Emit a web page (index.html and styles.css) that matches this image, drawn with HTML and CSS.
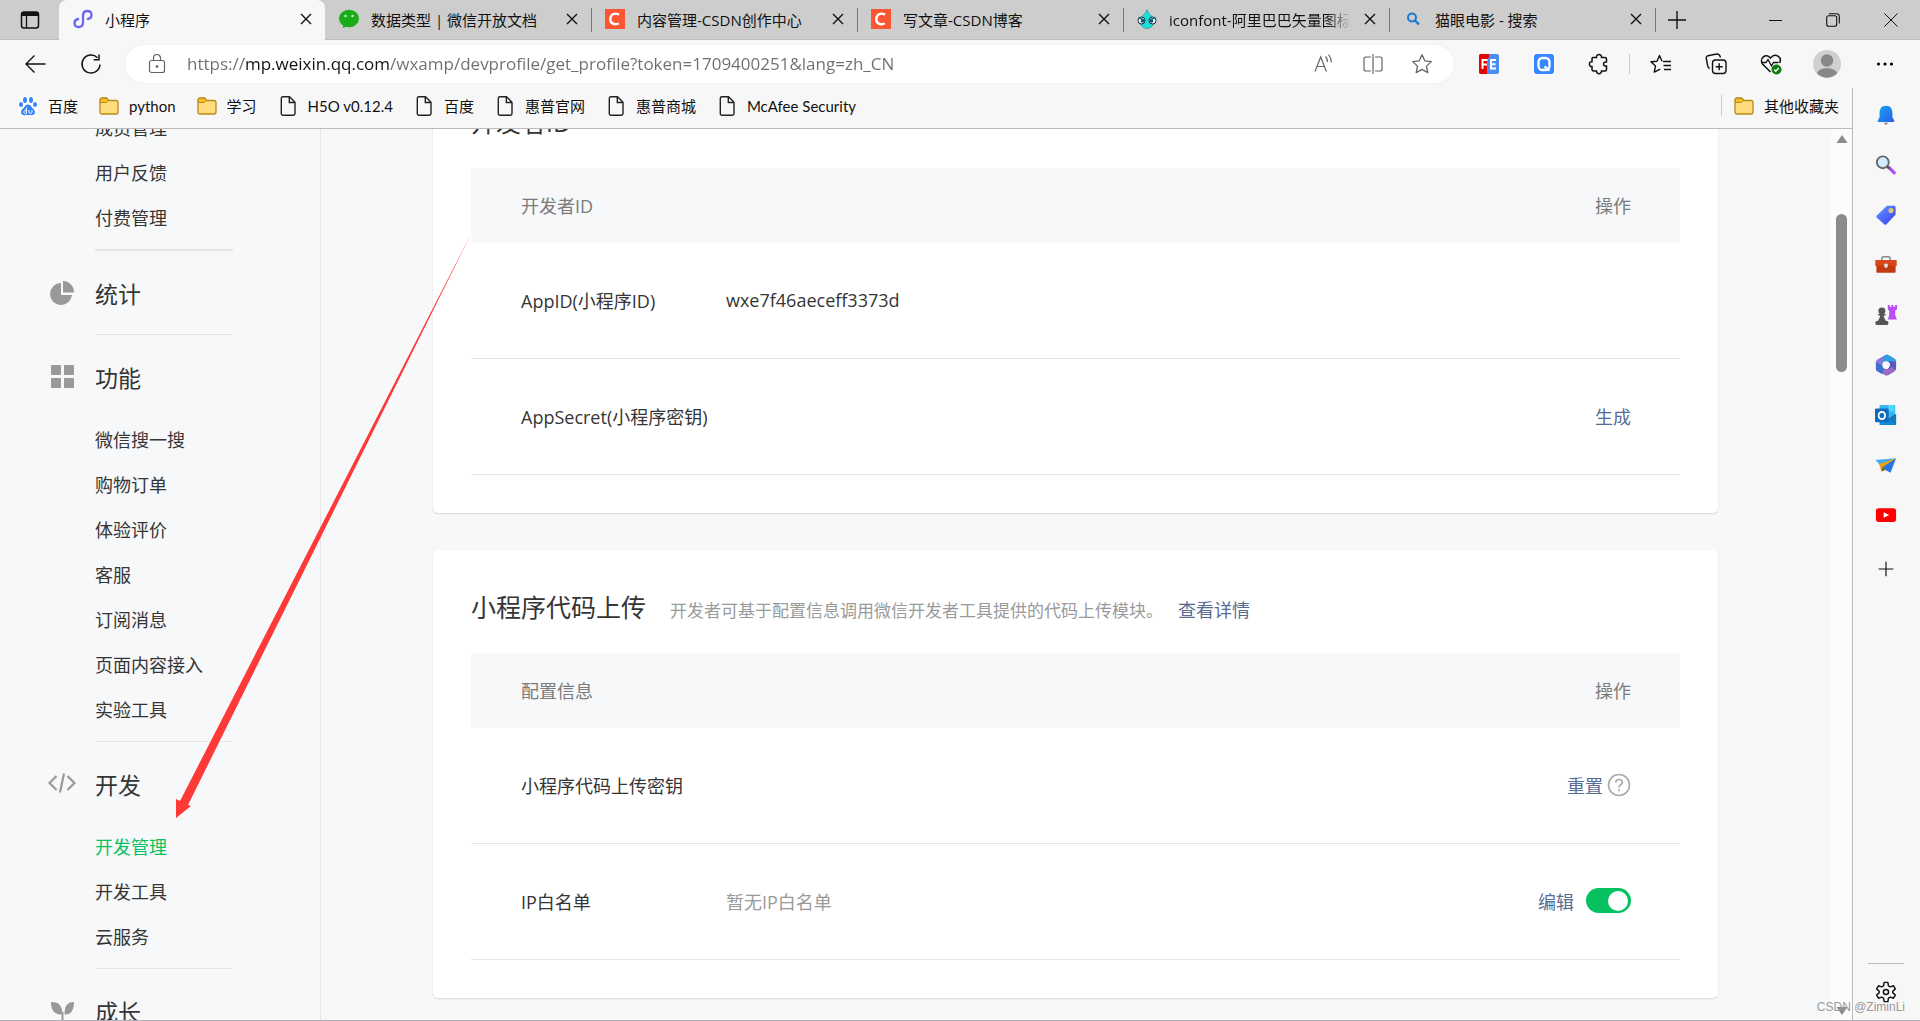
FILE: index.html
```html
<!DOCTYPE html>
<html lang="zh-CN">
<head>
<meta charset="utf-8">
<title>小程序</title>
<link rel="stylesheet" href="styles.css">
</head>
<body>
<svg class="sprite" aria-hidden="true">
  <symbol id="i-close" viewBox="0 0 12 12"><path d="M1 1l10 10M11 1L1 11" fill="none" stroke="#111" stroke-width="1.4"/></symbol>
  <symbol id="i-csdn" viewBox="0 0 20 20"><path d="M0 0h20v20H0z" fill="#fc5531"/><path d="M14 5.6C9.500 3.200 5.300 5.400 5.300 10.200c0 4.600 4 6 8.500 4.300" fill="none" stroke="#fff" stroke-width="2.400"/></symbol>
  <symbol id="i-folder" viewBox="0 0 20 20"><path d="M1 4.500C1 3 1.600 2 3 2h4.500l2.500 2.500h7c1.200 0 2 .8 2 2V16c0 1.200-.8 2-2 2H3c-1.200 0-2-.8-2-2z" fill="#ffdc7c" stroke="#b98a1c" stroke-width="1.300"/><path d="M1.300 6.500V4.300C1.300 3 2 2.300 3 2.300h4.300L9.600 4.500 7.500 6.500z" fill="#f5bd27" stroke="#b98a1c"/></symbol>
  <symbol id="i-doc" viewBox="0 0 20 20"><path d="M5 .8h6.500L17 6.300V17.500c0 1-.7 1.700-1.700 1.700H5c-1 0-1.700-.7-1.700-1.700v-15C3.300 1.500 4 .8 5 .8zM11.300 1v5.500H17" fill="none" stroke="#222" stroke-width="1.400"/></symbol>
</svg>

<header class="chrome">
  <div class="tabstrip">
    <button class="workspace" aria-label="标签页操作菜单"><svg width="20" height="20" viewBox="0 0 20 20"><rect x="1.500" y="2" width="17" height="16" rx="2.500" fill="none" stroke="#111" stroke-width="1.500"/><path d="M1.500 6V4.500a2.500 2.500 0 0 1 2.500-2.500h12a2.500 2.500 0 0 1 2.500 2.500V6z" fill="#111"/><path d="M6.500 6v12" stroke="#111" stroke-width="1.300"/></svg></button>
    <div class="tab tab-active">
      <svg class="tab-icon" viewBox="0 0 20 20"><path d="M10 13.500V6.500c0-2.700 1.800-4.500 4.300-4.500S18.500 3.700 18.500 6c0 2.100-1.500 3.600-3.600 4M10 6.500v7c0 2.700-1.800 4.500-4.300 4.500S1.500 16.300 1.500 14c0-2.100 1.500-3.600 3.600-4" fill="none" stroke="#6b67f0" stroke-width="2.300" stroke-linecap="round"/></svg>
      <span class="tab-title">小程序</span>
      <button class="tab-close" aria-label="关闭"><svg width="12" height="12"><use href="#i-close"/></svg></button>
    </div>
    <div class="tab">
      <svg class="tab-icon" viewBox="0 0 20 20"><ellipse cx="10" cy="9.500" rx="10" ry="8.700" fill="#1aad19"/><path d="M4 14v5l5-2z" fill="#1aad19"/><circle cx="6.500" cy="7" r="1.200" fill="#c8f0c8"/><circle cx="13.500" cy="7" r="1.200" fill="#c8f0c8"/></svg>
      <span class="tab-title">数据类型 | 微信开放文档</span>
      <button class="tab-close" aria-label="关闭"><svg width="12" height="12"><use href="#i-close"/></svg></button>
    </div>
    <div class="tab">
      <svg class="tab-icon"><use href="#i-csdn"/></svg>
      <span class="tab-title">内容管理-CSDN创作中心</span>
      <button class="tab-close" aria-label="关闭"><svg width="12" height="12"><use href="#i-close"/></svg></button>
    </div>
    <div class="tab">
      <svg class="tab-icon"><use href="#i-csdn"/></svg>
      <span class="tab-title">写文章-CSDN博客</span>
      <button class="tab-close" aria-label="关闭"><svg width="12" height="12"><use href="#i-close"/></svg></button>
    </div>
    <div class="tab">
      <svg class="tab-icon" viewBox="0 0 20 20"><path d="M10 .5C11 4 14 6 16 9c3 5-1 10.500-6 10.500S1 14 4 9c2-3 5-5 6-8.500z" fill="#18e0d8" stroke="#2a7f86" stroke-width=".6"/><circle cx="4.500" cy="11.500" r="3.500" fill="#fff" stroke="#123"/><circle cx="15.500" cy="11.500" r="3.500" fill="#fff" stroke="#123"/><circle cx="5.500" cy="12" r="1.800" fill="#124a7a"/><circle cx="14.500" cy="12" r="1.800" fill="#124a7a"/><path d="M1.500 8.500l6.500 3M18.500 8.500L12 11.500" stroke="#0e6f86" stroke-width="1.500"/></svg>
      <span class="tab-title tab-fade">iconfont-阿里巴巴矢量图标库</span>
      <button class="tab-close" aria-label="关闭"><svg width="12" height="12"><use href="#i-close"/></svg></button>
    </div>
    <div class="tab">
      <svg class="tab-icon" viewBox="0 0 20 20"><circle cx="9" cy="8.500" r="4" fill="none" stroke="#1b78d0" stroke-width="2"/><path d="M12 11.500l4 4" stroke="#1b78d0" stroke-width="2.400"/></svg>
      <span class="tab-title">猫眼电影 - 搜索</span>
      <button class="tab-close" aria-label="关闭"><svg width="12" height="12"><use href="#i-close"/></svg></button>
    </div>
    <button class="newtab" aria-label="新建标签页"><svg width="18" height="18"><path d="M9 0v18M0 9h18" stroke="#111" stroke-width="1.400"/></svg></button>
    <div class="window-buttons">
      <button aria-label="最小化"><svg width="14" height="14"><path d="M1 7.500h13" stroke="#111"/></svg></button>
      <button aria-label="还原"><svg width="14" height="14"><rect x=".7" y="2.700" width="10" height="10.500" rx="2" fill="none" stroke="#111" stroke-width="1.100"/><path d="M3 .7h7.500c1.700 0 2.800 1 2.800 2.800v7" fill="none" stroke="#111" stroke-width="1.100"/></svg></button>
      <button aria-label="关闭窗口"><svg width="14" height="14"><path d="M.5 .5l13 13M13.500 .5l-13 13" stroke="#111"/></svg></button>
    </div>
  </div>

  <div class="toolbar">
    <button class="nav-button" aria-label="返回"><svg width="22" height="20"><path d="M21.500 10H2M10.500 1.500L2 10l8.500 8.500" fill="none" stroke="#111" stroke-width="1.400"/></svg></button>
    <button class="nav-button" aria-label="刷新"><svg width="22" height="22"><path d="M20 11.500a9 9 0 1 1-2.600-6.800M19 1.500v5.200h-5.300" fill="none" stroke="#111" stroke-width="1.500"/></svg></button>
    <div class="address">
      <svg width="18" height="20" viewBox="0 0 18 20"><rect x="1.500" y="6.500" width="15" height="12" rx="2" fill="none" stroke="#666" stroke-width="1.200"/><path d="M5.500 6.500V4a3.500 3.500 0 0 1 7 0v2.500" fill="none" stroke="#666" stroke-width="1.200"/><circle cx="9" cy="12.500" r="1.300" fill="#555"/></svg>
      <input class="url" type="text" aria-label="地址栏" value="https://mp.weixin.qq.com/wxamp/devprofile/get_profile?token=1709400251&amp;lang=zh_CN">
      <button aria-label="朗读"><svg width="22" height="22" fill="none" stroke="#666" stroke-width="1.200"><path d="M2 18.500L7.700 4l5.700 14.500M4 13.500h7.500M12.500 3.500c1.300 1.500 2 3.500 2 5.500M15.500 1.500c2 2.500 3 5 3 8"/></svg></button>
      <button aria-label="分屏"><svg width="22" height="22" fill="none" stroke="#666" stroke-width="1.200"><path d="M9 4H4C2.700 4 2 4.700 2 6v10c0 1.300.7 2 2 2h5M13 4h5c1.300 0 2 .7 2 2v10c0 1.300-.7 2-2 2h-5M11 1v20"/></svg></button>
      <button aria-label="收藏"><svg width="22" height="22"><path d="M11 1.800l2.800 6 6.500.8-4.800 4.500 1.300 6.500L11 16.400l-5.800 3.200 1.300-6.500L1.700 8.600l6.500-.8z" fill="none" stroke="#666" stroke-width="1.300" stroke-linejoin="round"/></svg></button>
    </div>
    <div class="tools">
      <button aria-label="FE 扩展"><svg width="20" height="20" viewBox="0 0 20 20"><rect width="20" height="20" rx="2" fill="#4b8df5"/><path d="M0 2a2 2 0 0 1 2-2h8v3l-2 3v14H2a2 2 0 0 1-2-2z" fill="#e80000"/><path d="M3.500 15V6h5M3.500 10.500h4.500M17 6h-5v8.500h5M12 10.300h4.500" fill="none" stroke="#fff" stroke-width="2"/></svg></button>
      <button aria-label="Q 扩展"><svg width="20" height="20" viewBox="0 0 20 20"><rect width="20" height="20" rx="3" fill="#3688ff"/><rect x="4.500" y="4" width="11" height="12" rx="4" fill="none" stroke="#fff" stroke-width="2.300"/><path d="M10.500 12.500l5 4" stroke="#fff" stroke-width="2.300"/></svg></button>
      <button aria-label="扩展"><svg width="22" height="22"><path d="M5 4.500h3.500c-.6-4 5.600-4 5 0H17c1 0 1.500.5 1.500 1.500v3c-4-.6-4 4.600 0 4v3.500c0 1-.5 1.500-1.500 1.500h-3.500c.4 3.500-5.400 3.500-5 0H5.500c-1 0-1.500-.5-1.500-1.500V13.500c-3.500.5-3.500-5.300 0-4.800V6c0-1 .3-1.500 1-1.500z" fill="none" stroke="#111" stroke-width="1.500"/></svg></button>
      <span class="tool-divider"></span>
      <button aria-label="收藏夹"><svg width="22" height="22"><path d="M12 8.300L9.500 2.500 7 8.300l-6 .5 4.500 4.300-1.300 6 6-3M13 8.500h8M13.500 12.500h7.500M14 16.500h7" fill="none" stroke="#111" stroke-width="1.400" stroke-linejoin="round"/></svg></button>
      <button aria-label="集锦"><svg width="22" height="22" fill="none" stroke="#111" stroke-width="1.400"><rect x="7.500" y="7" width="13.500" height="13.500" rx="3"/><path d="M14.200 10.200v7M10.700 13.700h7M4.500 15.500C3.500 15 3 14 2.700 13L1.300 5.500C1 4 2 3 3 2.700L11.500 1C13 .8 14.500 1.500 15 3l.4 1.500"/></svg></button>
      <button aria-label="浏览器概要"><svg width="22" height="22"><path d="M10.500 19L2.500 11C-1 6 5.500-1 10.500 5c5-6 12-.5 9 5" fill="none" stroke="#111" stroke-width="1.500"/><path d="M1 9.500h5l2-3 3.500 6.500 2-3.500h5" fill="none" stroke="#111" stroke-width="1.300"/><circle cx="16.500" cy="16.500" r="5" fill="#107c10"/><path d="M14.200 16.500l1.600 1.700 3-3.200" fill="none" stroke="#fff" stroke-width="1.300"/></svg></button>
      <button aria-label="个人资料"><svg width="28" height="28" viewBox="0 0 28 28"><circle cx="14" cy="14" r="14" fill="#d2d0ce"/><circle cx="14" cy="10.500" r="6.200" fill="#8a8886"/><path d="M4 23.500c1-7 19-7 20 0C18.500 29 9.500 29 4 23.500z" fill="#8a8886"/></svg></button>
      <button aria-label="设置及其他"><svg width="20" height="6"><circle cx="3.500" cy="3" r="1.600"/><circle cx="10" cy="3" r="1.600"/><circle cx="16.500" cy="3" r="1.600"/></svg></button>
    </div>
  </div>
</header>

<div class="body">
  <div class="left">
    <nav class="bookmarks" aria-label="收藏夹栏">
      <a href="#"><svg class="bm-icon" viewBox="0 0 20 20"><path d="M0 0h20v20H0z" fill="#fff"/><g fill="#3385ff"><ellipse cx="7" cy="4" rx="2" ry="3"/><ellipse cx="13" cy="4" rx="2" ry="3"/><ellipse cx="3" cy="8.500" rx="2" ry="2.600"/><ellipse cx="17" cy="8.500" rx="2" ry="2.600"/><path d="M10 8.500c3 0 3.500 3 5.500 4.500 3 3 1 6.500-2 6.200-2-.3-5-.3-7 0-3 .3-5-3.200-2-6.200C6.500 11.500 7 8.500 10 8.500z"/></g><path d="M8.500 11.500v6M8.500 14.500c-3-1-3.500 3-1 3h1M11 14v2.500c0 1 2.500 1 3 0V14" fill="none" stroke="#fff"/></svg>百度</a>
      <a href="#"><svg class="bm-icon"><use href="#i-folder"/></svg>python</a>
      <a href="#"><svg class="bm-icon"><use href="#i-folder"/></svg>学习</a>
      <a href="#"><svg class="bm-icon"><use href="#i-doc"/></svg>H5O v0.12.4</a>
      <a href="#"><svg class="bm-icon"><use href="#i-doc"/></svg>百度</a>
      <a href="#"><svg class="bm-icon"><use href="#i-doc"/></svg>惠普官网</a>
      <a href="#"><svg class="bm-icon"><use href="#i-doc"/></svg>惠普商城</a>
      <a href="#"><svg class="bm-icon"><use href="#i-doc"/></svg>McAfee Security</a>
      <a class="bm-other" href="#"><svg class="bm-icon"><use href="#i-folder"/></svg>其他收藏夹</a>
    </nav>

    <div class="viewport">
      <nav class="menu" aria-label="小程序管理">
        <section>
          <a href="#">成员管理</a>
          <a href="#">用户反馈</a>
          <a href="#">付费管理</a>
        </section>
        <section class="menu-single">
          <h2><svg class="menu-icon" viewBox="0 0 28 28"><path d="M13 4v12h11A11 11 0 1 1 13 4z" fill="#999"/><path d="M15 2a11 11 0 0 1 11 11.500H15z" fill="#999"/></svg>统计</h2>
        </section>
        <section>
          <h2><svg class="menu-icon" viewBox="0 0 28 28" fill="#999"><rect x="3" y="2" width="10" height="10" rx="1"/><rect x="16" y="2" width="10" height="10" rx="1"/><rect x="3" y="15" width="10" height="10" rx="1"/><rect x="16" y="15" width="10" height="10" rx="1"/></svg>功能</h2>
          <a href="#">微信搜一搜</a>
          <a href="#">购物订单</a>
          <a href="#">体验评价</a>
          <a href="#">客服</a>
          <a href="#">订阅消息</a>
          <a href="#">页面内容接入</a>
          <a href="#">实验工具</a>
        </section>
        <section>
          <h2><svg class="menu-icon" viewBox="0 0 28 28"><path d="M8.500 6L1.500 13l7 7M19.500 6l7 7-7 7M16 3.500L12 22.500" fill="none" stroke="#999" stroke-width="2.200"/></svg>开发</h2>
          <a class="current" href="#">开发管理</a>
          <a href="#">开发工具</a>
          <a href="#">云服务</a>
        </section>
        <section>
          <h2><svg class="menu-icon" viewBox="0 0 28 28"><path d="M3 5c7-.5 11.500 3 11.500 12.500C7 18 3 14 3 5zM26 5c-6 0-9.500 3-9.500 12.500C23 18 26 13 26 5z" fill="#999"/><path d="M14.500 15v10" stroke="#999" stroke-width="2"/></svg>成长</h2>
        </section>
      </nav>

      <main class="content">
        <section class="card">
          <div class="card-head"><h3>开发者ID</h3></div>
          <table>
            <thead><tr><th class="c-name">开发者ID</th><th></th><th class="c-op">操作</th></tr></thead>
            <tbody>
              <tr><td>AppID(小程序ID)</td><td>wxe7f46aeceff3373d</td><td></td></tr>
              <tr><td colspan="2">AppSecret(小程序密钥)</td><td class="c-op"><a href="#">生成</a></td></tr>
            </tbody>
          </table>
        </section>
        <section class="card">
          <div class="card-head">
            <h3>小程序代码上传</h3>
            <p>开发者可基于配置信息调用微信开发者工具提供的代码上传模块。</p>
            <a href="#">查看详情</a>
          </div>
          <table>
            <thead><tr><th class="c-name">配置信息</th><th></th><th class="c-op">操作</th></tr></thead>
            <tbody>
              <tr><td>小程序代码上传密钥</td><td></td><td class="c-op"><div class="ops ops-tight"><a href="#">重置</a><svg width="24" height="24"><circle cx="12" cy="12" r="10.500" fill="none" stroke="#aaa" stroke-width="1.600"/><path d="M8.800 9.500c0-4 6.400-4 6.400 0 0 2.300-3.200 2.300-3.200 5M12 16.300v2" fill="none" stroke="#aaa" stroke-width="1.700"/></svg></div></td></tr>
              <tr><td>IP白名单</td><td class="muted">暂无IP白名单</td><td class="c-op"><div class="ops"><a href="#">编辑</a><input class="switch" type="checkbox" aria-label="IP白名单" checked></div></td></tr>
            </tbody>
          </table>
        </section>
      </main>

      <div class="scrollbar">
        <svg width="12" height="10"><path d="M6 1l5.500 8H.5z" fill="#8b8b8b"/></svg>
        <span class="thumb"></span>
        <svg width="12" height="10"><path d="M6 9L.5 1h11z" fill="#8b8b8b"/></svg>
      </div>
    </div>
  </div>

  <aside class="rail">
    <button aria-label="通知"><svg viewBox="0 0 24 24"><defs><linearGradient id="g1" x2="1" y2="1"><stop stop-color="#17a3ea"/><stop offset="1" stop-color="#2a5ff0"/></linearGradient></defs><path d="M9.500 20.500h5L12 23z" fill="#777"/><path d="M12 2c5 0 7 3.500 7 8v4.500l2 3.500c.3 1-.2 1.500-1 1.500H4c-.8 0-1.300-.5-1-1.500l2-3.500V10c0-4.500 2-8 7-8z" fill="url(#g1)"/></svg></button>
    <button aria-label="搜索"><svg viewBox="0 0 24 24"><path d="M15.500 15l5.500 5.500" stroke="#b44cf5" stroke-width="3.500" stroke-linecap="round"/><circle cx="8.500" cy="9" r="6.500" fill="#d3ecff" stroke="#666" stroke-width="2"/><path d="M13 13.500l2.500 2.500" stroke="#555" stroke-width="2.500"/></svg></button>
    <button aria-label="购物"><svg viewBox="0 0 24 24"><defs><linearGradient id="g2" x2="1" y2="1"><stop stop-color="#5fa0ff"/><stop offset="1" stop-color="#3b35f5"/></linearGradient></defs><path d="M13 2h7.500c1.300 0 2 .7 2 2v7.500l-10 10.500c-.8.8-1.600.8-2.400 0L2 15c-.8-.8-.8-1.600 0-2.400z" fill="url(#g2)"/><circle cx="17.500" cy="7" r="2" fill="#bda9ff" stroke="#f5d432" stroke-width="1.500"/></svg></button>
    <button aria-label="工具"><svg viewBox="0 0 24 24"><path d="M7.500 7V5c0-1.500.5-2 2-2h5c1.500 0 2 .5 2 2v2" fill="none" stroke="#888" stroke-width="1.700"/><path d="M.3 7.500c0-.5.5-1 1-1h21.400c.5 0 1 .5 1 1V13H.3z" fill="#d9481a"/><path d="M1.500 12.500h21V19c0 1-.5 1.500-1.500 1.500H3c-1 0-1.500-.5-1.500-1.500z" fill="#c23a12"/><path d="M10 10.500h4V14l-2 1.500-2-1.500z" fill="#ddd"/></svg></button>
    <button aria-label="游戏"><svg viewBox="0 0 24 24"><path d="M14 1h2v2h2V1h2v2h2V1h2v5l-2 1v5l2 5H14l1.500-5V7L14 6z" fill="#b94ff2"/><g fill="#555"><circle cx="7.500" cy="7.500" r="3.800"/><path d="M3.500 11h8v1.500h-2c0 3 1.500 4 2.500 6H3c1-2 2.500-3 2.500-6h-2z"/><rect x=".5" y="18.500" width="14" height="4.500" rx="1.500"/></g></svg></button>
    <button aria-label="Microsoft 365"><svg viewBox="0 0 24 24"><path d="M12 .8L3 5.800C1.800 6.500 1 7.600 1 9v7.500l8 1.500V9.500z" fill="#8c78dc"/><path d="M12 .8c1-.4 1.800-.3 2.700.2L21 4.800c1.300.8 2 2 2 3.500V14L14 9 8 10.500 9 3z" fill="#2c9fdf"/><path d="M23 8.500v7c0 1.500-.7 2.600-2 3.400l-6.500 3.900-1-6.300L16.500 12l-1.500-4.500z" fill="#5b57c4"/><path d="M14.700 22.800c-1.300.8-3 .8-4.300 0L6 20l2-5 6 1.500 5-2.500 3 4-1 1z" fill="#9a6ac6"/><path d="M1 9v7c0 1.400.8 2.500 2 3.200l5 3 1.500-5.700-2-4.500z" fill="#3d6fd0"/><circle cx="12" cy="12" r="4" fill="#f7f7f7"/></svg></button>
    <button aria-label="Outlook"><svg viewBox="0 0 24 24"><path d="M5 1h16c.7 0 1 .3 1 1v12H5z" fill="#38b6ee"/><path d="M14 1h7v7h-7z" fill="#50d9ff"/><path d="M5 11l10 4 8-4v12H5z" fill="#1487d8"/><path d="M23 11v12L13 16z" fill="#147ac0"/><rect x="0" y="5" width="15" height="15" rx="1.500" fill="#0f6cbd"/><ellipse cx="7.500" cy="12.500" rx="3.500" ry="4" fill="none" stroke="#fff" stroke-width="2"/></svg></button>
    <button aria-label="Drop"><svg viewBox="0 0 24 24"><path d="M.5 6.500L23 4.500 5.500 12z" fill="#3aaef5"/><path d="M23 4.500L4.500 11l2.500 8z" fill="#f1a20b"/><path d="M23 4.500L8 14.500l3.500 3 5.500 3z" fill="#2876e4"/><path d="M7 19l1-4.500 3.500 3z" fill="#8a5d16"/></svg></button>
    <button aria-label="YouTube"><svg viewBox="0 0 24 24"><rect x="1" y="4.500" width="22" height="15" rx="3" fill="#f00"/><path d="M9.500 9v6l6-3z" fill="#fff"/></svg></button>
    <button class="rail-add" aria-label="自定义侧栏"><svg viewBox="0 0 24 24"><path d="M12 4v16M4 12h16" stroke="#111" stroke-width="1.300"/></svg></button>
    <div class="rail-foot"><button aria-label="设置"><svg viewBox="0 0 24 24" fill="none" stroke="#111" stroke-width="1.600" stroke-linejoin="round"><path d="M10 1.500h4l.7 3.700 2 1.200 3.500-1.200 2 3.500L19.500 11v2l2.700 2.300-2 3.500-3.500-1.200-2 1.200-.7 3.700h-4l-.7-3.700-2-1.200-3.500 1.200-2-3.500L4.500 13v-2L1.800 8.700l2-3.500 3.500 1.200 2-1.200z"/><circle cx="12" cy="12" r="2.800"/></svg></button></div>
  </aside>
</div>

<svg class="arrow" width="300" height="590" viewBox="0 0 300 590" aria-hidden="true"><path d="M295 0L12 571l3 1L0 584V565l4 2z" fill="#fd3a38"/></svg>
<div class="watermark">CSDN @ZiminLi</div>
</body>
</html>
```
FILE: styles.css
```css
* { box-sizing: border-box; }

body {
  margin: 0;
  height: 100vh;
  display: flex;
  flex-direction: column;
  overflow: hidden;
  background: #f7f7f7;
  border-bottom: 1px solid #b0aeb8;
  font-family: "Open Sans", "Noto Sans CJK SC", sans-serif;
  font-size: 15px;
  color: #111;
}

h2, h3, p { margin: 0; font-weight: 400; }
a { color: inherit; text-decoration: none; }
svg { display: block; flex: none; }
button { display: grid; place-items: center; border: 0; padding: 0; background: none; color: inherit; font: inherit; }
.sprite { position: absolute; width: 0; height: 0; }

/* tab strip */
.tabstrip { display: flex; height: 40px; background: #cdcdcd; box-shadow: inset 0 -1px #bdbdbd; }
.workspace { width: 59px; }
.tab {
  position: relative;
  display: flex;
  align-items: center;
  width: 266px;
  padding: 0 12px 2px 14px;
  gap: 12px;
}
.tab:not(.tab-active)::after { content: ""; position: absolute; right: -1px; top: 8px; width: 1px; height: 24px; background: #777; }
.tab-active { background: #f7f7f7; border-radius: 8px 8px 0 0; }
.tab-icon, .bm-icon { width: 20px; height: 20px; }
.tab-title { flex: 1; overflow: hidden; white-space: nowrap; }
.tab-fade { -webkit-mask-image: linear-gradient(to left, transparent, #000 24px); mask-image: linear-gradient(to left, transparent, #000 24px); }
.tab-close { width: 14px; height: 20px; }
.newtab { width: 44px; }
.window-buttons { display: flex; margin-left: auto; }
.window-buttons button { width: 58px; }

/* toolbar */
.toolbar { display: flex; align-items: center; height: 48px; padding: 0 6px 0 7px; }
.nav-button { width: 56px; height: 40px; }
.address {
  flex: 1;
  display: flex;
  align-items: center;
  height: 38px;
  margin-left: 6px;
  padding: 0 8px 0 23px;
  border-radius: 19px;
  background: #fff;
  box-shadow: 0 0 3px #0001;
}
.address button { width: 49px; height: 36px; }
.url {
  flex: 1;
  height: 36px;
  margin-left: 21px;
  border: 0;
  padding: 0 0 2px;
  outline: 0;
  font: inherit;
  font-size: 17px;
  color: transparent;
  background: linear-gradient(to right, #6e6e6e 57px, #111 57px, #111 203px, #6e6e6e 203px);
  -webkit-background-clip: text;
  background-clip: text;
}
.tools { display: flex; align-items: center; padding-left: 7px; }
.tools button { width: 55px; height: 40px; }
.tools button:nth-last-child(-n+2) { width: 58px; }
.tool-divider { width: 1px; height: 20px; margin: 0 3px; background: #ccc; }

/* page area beside the browser side rail */
.body { flex: 1; min-height: 0; display: flex; }
.left { flex: 1; min-width: 0; display: flex; flex-direction: column; }
.bookmarks {
  display: flex;
  align-items: center;
  gap: 21px;
  height: 41px;
  padding: 0 13px 5px 18px;
  border-bottom: 1px solid #bbb;
  font-family: Lato, "Noto Sans CJK SC", sans-serif;
}
.bookmarks a { display: flex; align-items: center; gap: 10px; white-space: nowrap; }
.bookmarks .bm-other { margin-left: auto; padding-left: 12px; border-left: 1px solid #ccc; }

.viewport { flex: 1; min-height: 0; display: flex; overflow: hidden; background: #f7f8fa; color: #353535; font-size: 18px; }

/* left menu */
.menu { width: 321px; padding-left: 48px; margin-top: -23px; border-right: 1px solid #e4e5e7; }
.menu section { padding-bottom: 8px; }
.menu .menu-single { padding-bottom: 0; }
.menu section + section::before { content: ""; display: block; width: 138px; height: 1px; margin-left: 47px; background: #e2e3e5; }
.menu section:nth-child(2)::before { height: 2px; }
.menu a { display: block; padding: 0 0 1px 47px; line-height: 44px; }
.menu h2 { display: flex; align-items: center; gap: 19px; height: 83px; font-size: 23px; }
.menu-icon { width: 28px; height: 28px; }
.menu .current { color: #07c160; }

/* cards */
.content { flex: 1; display: flex; flex-direction: column; gap: 37px; margin-top: -64px; padding: 0 113px 0 112px; }
.card { padding: 0 38px 38px; border-radius: 5px; background: #fff; box-shadow: 0 1px 2px #0002; }
.card-head { display: flex; align-items: baseline; height: 103px; padding-top: 39px; line-height: 36px; }
.card-head h3 { margin-right: 24px; font-size: 25px; }
.card-head p { margin-right: 15px; font-size: 17px; color: #9a9a9a; }
.content a { color: #576b95; }
table { width: 100%; table-layout: fixed; border-collapse: separate; border-spacing: 0; }
th { height: 75px; padding: 0 0 2px; background: #f6f8fa; color: #7b7b7b; font-weight: 400; text-align: left; }
td { height: 116px; padding: 0 0 2px; border-bottom: 1px solid #e4e5e7; }
th:first-child, td:first-child { padding-left: 50px; }
th.c-name { width: 255px; }
th.c-op { width: 200px; }
th.c-op, td.c-op { padding-right: 49px; text-align: right; }
.muted { color: #9a9a9a; }
.ops { display: flex; align-items: center; justify-content: flex-end; gap: 12px; }
.ops-tight { gap: 4px; }
.switch { appearance: none; width: 45px; height: 25px; margin: 0; padding: 3px; border-radius: 13px; background: #07c160; }
.switch::before { content: ""; display: block; width: 20px; height: 20px; margin-left: 19px; border-radius: 50%; background: #fff; }

/* scrollbar */
.scrollbar { display: flex; flex-direction: column; align-items: center; width: 21px; padding: 5px 0 4px; background: #fcfcfc; }
.thumb { width: 11px; height: 158px; margin: 70px 0 auto; border-radius: 6px; background: #8b8b8b; }

/* browser side rail */
.rail { display: flex; flex-direction: column; align-items: center; width: 68px; padding: 2px 2px 0 0; border-left: 1px solid #bbb; }
.rail button { width: 36px; height: 50px; }
.rail svg { width: 22px; height: 22px; }
.rail .rail-add { margin-top: 4px; }
.rail-foot { margin-top: auto; border-top: 1px solid #bbb; padding: 3px 0; }

/* overlays on the page */
.arrow { position: absolute; left: 176px; top: 234px; pointer-events: none; }
.watermark { position: absolute; right: 15px; bottom: 5px; font: 12px/18px "Liberation Sans", sans-serif; color: #999; }
```
